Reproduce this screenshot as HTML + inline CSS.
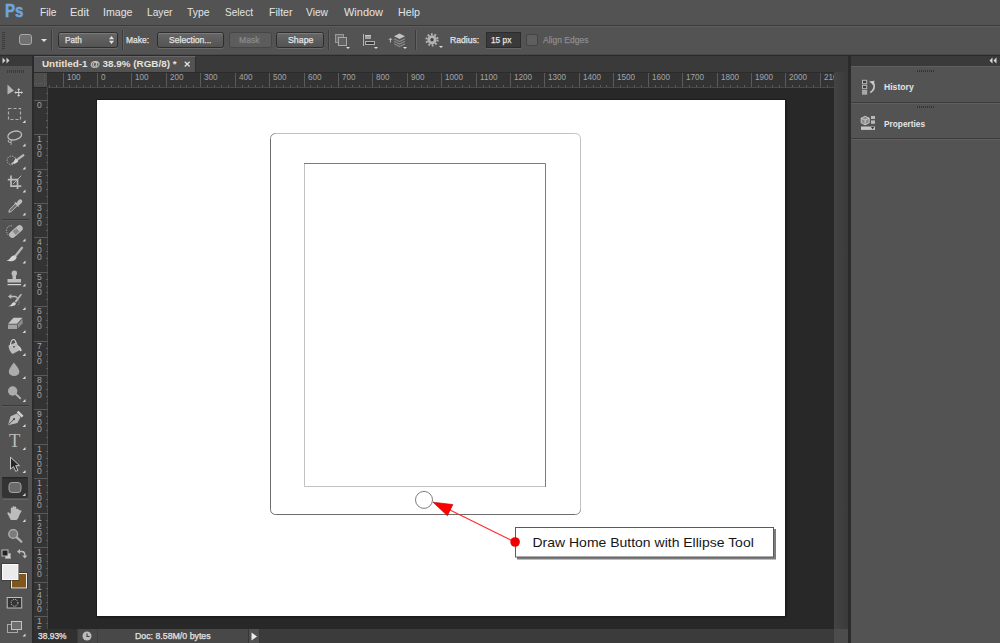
<!DOCTYPE html><html><head><meta charset="utf-8"><title>Photoshop</title><style>
*{margin:0;padding:0;box-sizing:border-box}
html,body{width:1000px;height:643px;overflow:hidden;background:#535353;font-family:"Liberation Sans","DejaVu Sans",sans-serif;}
.a{position:absolute}
.t{position:absolute;white-space:nowrap;color:#e4e4e4;line-height:1}
.btn{position:absolute;top:32px;height:16px;border:1px solid #2e2e2e;border-radius:2.5px;background:linear-gradient(#666,#545454);box-shadow:0 1px 0 rgba(255,255,255,.12), inset 0 1px 0 rgba(255,255,255,.14)}
.sep{position:absolute;top:30px;height:20px;width:2px;border-left:1px solid #3c3c3c;border-right:1px solid #616161}
.rl{position:absolute;font-size:9px;color:#a2a4a8;line-height:9px;white-space:nowrap;transform-origin:0 0;transform:scaleX(.9)}
.vl{position:absolute;font-size:8.6px;color:#a2a4a8;line-height:7.3px;width:6px;text-align:center;word-break:break-all}
.ob{-webkit-text-stroke:0.25px currentColor}
#ps{-webkit-text-stroke:0.5px #6fa5dc}
</style></head><body>
<div class="a" style="left:0;top:0;width:1000px;height:25px;background:#535353"></div>
<div class="a" style="left:0;top:25px;width:1000px;height:1px;background:#3a3a3a"></div>
<div class="a" style="left:0;top:26px;width:1000px;height:1px;background:#5e5e5e"></div>
<div class="t " id="ps" style="left:5px;top:3.19px;font-size:17.5px;line-height:17.5px;height:17.5px;transform-origin:0 0;transform:scaleX(0.8596);font-weight:bold;color:#6fa5dc;">Ps</div>
<div class="t m" style="left:39.5px;top:6.69px;font-size:11px;line-height:11px;height:11px;transform-origin:0 0;transform:scaleX(0.9310);">File</div>
<div class="t m" style="left:70px;top:6.69px;font-size:11px;line-height:11px;height:11px;transform-origin:0 0;transform:scaleX(1.0024);">Edit</div>
<div class="t m" style="left:102.5px;top:6.69px;font-size:11px;line-height:11px;height:11px;transform-origin:0 0;transform:scaleX(0.9650);">Image</div>
<div class="t m" style="left:147px;top:6.69px;font-size:11px;line-height:11px;height:11px;transform-origin:0 0;transform:scaleX(0.9268);">Layer</div>
<div class="t m" style="left:187px;top:6.69px;font-size:11px;line-height:11px;height:11px;transform-origin:0 0;transform:scaleX(0.9436);">Type</div>
<div class="t m" style="left:225px;top:6.69px;font-size:11px;line-height:11px;height:11px;transform-origin:0 0;transform:scaleX(0.9159);">Select</div>
<div class="t m" style="left:268.5px;top:6.69px;font-size:11px;line-height:11px;height:11px;transform-origin:0 0;transform:scaleX(0.9614);">Filter</div>
<div class="t m" style="left:306px;top:6.69px;font-size:11px;line-height:11px;height:11px;transform-origin:0 0;transform:scaleX(0.9305);">View</div>
<div class="t m" style="left:344px;top:6.69px;font-size:11px;line-height:11px;height:11px;transform-origin:0 0;transform:scaleX(0.9969);">Window</div>
<div class="t m" style="left:398px;top:6.69px;font-size:11px;line-height:11px;height:11px;transform-origin:0 0;transform:scaleX(0.9725);">Help</div>
<div class="a" style="left:0;top:27px;width:1000px;height:27px;background:#535353"></div>
<div class="a" style="left:0;top:54px;width:1000px;height:1px;background:#484848"></div><div class="a" style="left:0;top:55px;width:1000px;height:1px;background:#2b2b2b"></div>
<div class="a" style="left:2px;top:32px;width:3px;height:18px;background:repeating-linear-gradient(#3a3a3a 0 1px,transparent 1px 2px)"></div>
<div class="a" style="left:19px;top:34px;width:13px;height:11px;border:1px solid #a9a9a9;border-radius:3px;background:#707070"></div>
<div class="a" style="left:41px;top:39px;width:0;height:0;border-left:3px solid transparent;border-right:3px solid transparent;border-top:3px solid #e0e0e0"></div>
<div class="sep" style="left:51px"></div>
<div class="btn" style="left:58px;width:60px"></div>
<div class="t ob" style="left:65.4px;top:35.98px;font-size:9px;line-height:9px;height:9px;transform-origin:0 0;transform:scaleX(0.9075);">Path</div>
<svg class="a" style="left:108px;top:35px" width="8" height="11"><path d="M1 4.300L3.500 1L6 4.300Z M1 5.700L3.500 9L6 5.700Z" fill="#e4e4e4"/></svg>
<div class="sep" style="left:122px"></div>
<div class="t ob" style="left:126px;top:35.98px;font-size:9px;line-height:9px;height:9px;transform-origin:0 0;transform:scaleX(0.9385);">Make:</div>
<div class="btn" style="left:157px;width:67px"></div>
<div class="t ob" style="left:168.5px;top:35.98px;font-size:9px;line-height:9px;height:9px;transform-origin:0 0;transform:scaleX(0.9546);">Selection...</div>
<div class="btn" style="left:229px;width:43px;background:#5c5c5c;border-color:#464646;box-shadow:none"></div>
<div class="t ob" style="left:239.4px;top:35.98px;font-size:9px;line-height:9px;height:9px;transform-origin:0 0;transform:scaleX(0.9581);color:#8a8a8a;">Mask</div>
<div class="btn" style="left:276px;width:48px"></div>
<div class="t ob" style="left:287.6px;top:35.98px;font-size:9px;line-height:9px;height:9px;transform-origin:0 0;transform:scaleX(0.9761);">Shape</div>
<div class="sep" style="left:328px"></div>
<svg class="a" style="left:334px;top:33px" width="18" height="17">
<rect x="1.5" y="1.5" width="8" height="8" fill="#6c6c6c" stroke="#999"/>
<rect x="4.5" y="4.5" width="8" height="8" fill="#626262" stroke="#a8a8a8"/>
<path d="M12 14 h4 l-2 2z" fill="#ddd"/></svg>
<svg class="a" style="left:361px;top:33px" width="19" height="17">
<path d="M2.5 1 v12" stroke="#b4b4b4" stroke-width="1"/>
<rect x="4" y="2" width="6" height="4" fill="#a4a4a4"/><rect x="4" y="2" width="6" height="1" fill="#c8c8c8"/>
<rect x="4.5" y="8.5" width="9" height="3" fill="#3a3a3a" stroke="#b0b0b0"/>
<path d="M13 14 h4 l-2 2z" fill="#ddd"/></svg>
<svg class="a" style="left:388px;top:32px" width="20" height="18">
<path d="M2.5 6.5 v4 M0.8 8 l1.7 -1.8 l1.7 1.8" stroke="#bbb" fill="none"/>
<path d="M11.5 1.5 l5.5 2.800 l-5.5 2.800 l-5.5 -2.800z" fill="#c4c4c4"/>
<path d="M6 6.800 l5.5 2.800 l5.5 -2.800 M6 9.300 l5.5 2.800 l5.5 -2.800 M6 11.800 l5.5 2.800 l5.5 -2.800" stroke="#8a8a8a" fill="none" stroke-width="1.2"/>
<path d="M15 15 h4 l-2 2z" fill="#ddd"/></svg>
<div class="sep" style="left:415px"></div>
<svg class="a" style="left:424px;top:33px" width="20" height="17">
<g transform="translate(8,6.8)"><circle r="4.6" fill="#b4b4b4"/><circle r="5.6" fill="none" stroke="#b4b4b4" stroke-width="2" stroke-dasharray="1.76 1.76"/><circle r="1.7" fill="#404040"/></g>
<path d="M15 13 h4 l-2 2z" fill="#ddd"/></svg>
<div class="t ob" style="left:449.5px;top:35.98px;font-size:9px;line-height:9px;height:9px;transform-origin:0 0;transform:scaleX(0.9569);">Radius:</div>
<div class="a" style="left:486px;top:32px;width:35px;height:16px;background:#3a3a3a;border:1px solid #2c2c2c;box-shadow:0 1px 0 rgba(255,255,255,.1)"></div>
<div class="t ob" style="left:490.7px;top:35.98px;font-size:9px;line-height:9px;height:9px;transform-origin:0 0;transform:scaleX(0.9221);">15 px</div>
<div class="a" style="left:526px;top:34px;width:12px;height:12px;background:#5e5e5e;border:1px solid #444;border-radius:2px"></div>
<div class="t ob" style="left:542.5px;top:35.98px;font-size:9px;line-height:9px;height:9px;transform-origin:0 0;transform:scaleX(0.9473);color:#8c8c8c;">Align Edges</div>
<div class="a" style="left:0;top:56px;width:32px;height:10px;background:#3a3a3a"></div>
<div class="a" style="left:0;top:66px;width:32px;height:577px;background:#535353"></div>
<div class="a" style="left:32px;top:56px;width:2px;height:587px;background:#2b2b2b"></div>
<svg class="a" style="left:0;top:56px" width="32" height="587" viewBox="0 56 32 587"><path d="M2.5 57.5l3 3l-3 3z M6.5 57.5l3 3l-3 3z" fill="#d0d0d0"/><rect x="7" y="70" width="1" height="3" fill="#3a3a3a"/><rect x="9" y="70" width="1" height="3" fill="#3a3a3a"/><rect x="11" y="70" width="1" height="3" fill="#3a3a3a"/><rect x="13" y="70" width="1" height="3" fill="#3a3a3a"/><rect x="15" y="70" width="1" height="3" fill="#3a3a3a"/><rect x="17" y="70" width="1" height="3" fill="#3a3a3a"/><rect x="19" y="70" width="1" height="3" fill="#3a3a3a"/><rect x="21" y="70" width="1" height="3" fill="#3a3a3a"/><rect x="23" y="70" width="1" height="3" fill="#3a3a3a"/><rect x="2" y="219" width="27" height="1" fill="#3a3a3a"/><rect x="2" y="220" width="27" height="1" fill="#5c5c5c"/><rect x="2" y="405" width="27" height="1" fill="#3a3a3a"/><rect x="2" y="406" width="27" height="1" fill="#5c5c5c"/><path d="M7.5 84.5v10l6.4 -3.8z" fill="#b4b4b4"/><path d="M18.700 89.500v6M15.700 92.500h6" stroke="#d4d4d4" stroke-width="1"/><path d="M18.700 88.200l-1.600 1.800h3.200z M18.700 96.800l-1.600 -1.800h3.200z M14.400 92.500l1.800 -1.600v3.200z M23 92.500l-1.800 -1.600v3.200z" fill="#d4d4d4"/><rect x="8.5" y="108.500" width="12" height="11" fill="none" stroke="#adadad" stroke-width="1.2" stroke-dasharray="3 2"/><path d="M25.5 120v3h-3z" fill="#dcdcdc"/><ellipse cx="14.700" cy="135.500" rx="7" ry="4.300" transform="rotate(-14 14.700 135.500)" fill="none" stroke="#bcbcbc" stroke-width="1.300"/><path d="M9 139.500q-1.500 1.200 -0.300 2.600q1.600 0.900 2.600 -0.400q0.400 -1.400 -1.300 -2.200 M10.800 142q0.800 1.400 0.200 2.800" fill="none" stroke="#bcbcbc" stroke-width="1"/><path d="M25.5 143.5v3h-3z" fill="#dcdcdc"/><circle cx="11.500" cy="160.400" r="4.400" fill="none" stroke="#bcbcbc" stroke-width="1" stroke-dasharray="1.300 1.300"/><path d="M23.300 155.300l-6.400 4.600" stroke="#b6b6b6" stroke-width="2.300" stroke-linecap="round"/><path d="M15.600 158.200l2.800 3q-2.800 3.400 -7.600 2.400q3.400 -1.400 4.800 -5.400z" fill="#d4d4d4"/><path d="M25.5 166.5v3h-3z" fill="#dcdcdc"/><path d="M11 175.500v10.600h10.300 M7.800 179.700h9.700v9.300" fill="none" stroke="#bcbcbc" stroke-width="1.700"/><path d="M21.300 175.700l-8.300 8.300" stroke="#bcbcbc" stroke-width="0.900"/><path d="M25.5 189.5v3h-3z" fill="#dcdcdc"/><path d="M8.800 212.200l0.800 -2.600l6.600 -6.600l1.800 1.800l-6.600 6.600z" fill="#6c6c6c" stroke="#bcbcbc" stroke-width="1"/><path d="M14.800 202.600l3.800 3.800 M16.400 204.200l2.600 -3.400q1.300 -1.300 2.300 -0.400q0.900 1 -0.400 2.300l-3.300 2.700z" fill="#bcbcbc" stroke="#bcbcbc" stroke-width="1.400" stroke-linejoin="round"/><path d="M25.5 212.5v3h-3z" fill="#dcdcdc"/><g transform="rotate(-42 16 231.500)"><rect x="8" y="228.300" width="16" height="6.400" rx="3.200" fill="#bcbcbc"/><rect x="13.500" y="229.300" width="5" height="4.400" fill="#8a8a8a"/></g><path d="M10.500 236.500q-5 -2.500 -3.600 -8q1.600 -3.600 5.600 -2.400" fill="none" stroke="#bcbcbc" stroke-width="1" stroke-dasharray="1.200 1.200"/><path d="M25.5 238.5v3h-3z" fill="#dcdcdc"/><path d="M22 247.800l-6.600 8.200" stroke="#b6b6b6" stroke-width="2.300" stroke-linecap="round"/><path d="M14.600 255.200l2.200 2q-1.200 3.400 -5 4q-3 0.300 -5.200 -0.700q3 -0.700 3.800 -2.700q1.200 -2.600 4.200 -2.600z" fill="#d4d4d4"/><path d="M25.5 260.5v3h-3z" fill="#dcdcdc"/><path d="M12 271.500q2.400 -1.800 4.800 0q0.900 2.200 -0.800 4.300v3.200h5v3.500h-13.500v-3.500h5v-3.200q-1.700 -2.100 -0.500 -4.300z" fill="#bcbcbc"/><rect x="7.500" y="284" width="13.500" height="1.200" fill="#d4d4d4"/><path d="M25.5 283.5v3h-3z" fill="#dcdcdc"/><path d="M22 294.500l-1.200 -0.800l-6.300 7.800l1.600 1.300z" fill="#bcbcbc"/><path d="M14.200 302l1.900 1.700q-1.600 3 -8 2.600q3.200 -1 3.700 -2.500q0.900 -1.700 2.400 -1.800z" fill="#d4d4d4"/><path d="M10.500 296.500h4.500q1.800 0.200 2 1.600" fill="none" stroke="#bcbcbc" stroke-width="1.500"/><path d="M8 296.500l3.300 -2.600v5.200z" fill="#bcbcbc"/><path d="M18.500 300.500q1.600 2.500 -0.500 5" fill="none" stroke="#9a9a9a" stroke-dasharray="1 1"/><path d="M25.5 307v3h-3z" fill="#dcdcdc"/><path d="M13.500 317.800h9l-5.500 6h-9z" fill="#c6c6c6"/><path d="M8 324.600h9v4.400h-9z" fill="#a2a2a2"/><path d="M17.800 324.200l4.800 -5.400v4.400l-4.800 5.400z" fill="#8c8c8c"/><path d="M25.5 330v3h-3z" fill="#dcdcdc"/><path d="M8.500 345.500l8 -3.200l3.600 7.600l-7.600 4q-3.600 -2.800 -4 -8.400z" fill="#bcbcbc"/><path d="M10.500 345.500q0.200 -5.400 2.800 -6q2.400 0 2.800 4.200" fill="none" stroke="#d4d4d4" stroke-width="1.200"/><path d="M17.500 345.200q3.800 1.600 4.200 5.400q-1 1.400 -2 -0.200q-0.400 -2.800 -2.600 -4.200z" fill="#d4d4d4"/><rect x="13" y="346" width="2" height="1.500" fill="#666"/><path d="M25.5 353v3h-3z" fill="#dcdcdc"/><path d="M13.800 362.500q5.600 6.400 5.600 9.200a5.300 4.300 0 0 1 -10.600 0q0 -2.800 5 -9.200z" fill="#acacac"/><path d="M25.5 376v3h-3z" fill="#dcdcdc"/><circle cx="12.700" cy="391" r="4.700" fill="#acacac"/><path d="M15.800 394l5 4.800" stroke="#b4b4b4" stroke-width="1.800"/><path d="M25.5 399v3h-3z" fill="#dcdcdc"/><path d="M8 425.200l2.600 -9l6.400 -2.800l3.600 3.600l-3.200 6z" fill="#bcbcbc"/><path d="M8.600 424.600l5 -5" stroke="#4a4a4a" stroke-width="1"/><circle cx="14" cy="419.200" r="1.100" fill="#4a4a4a"/><path d="M17.600 411.600l5 5" stroke="#d4d4d4" stroke-width="2.400"/><path d="M25.5 424v3h-3z" fill="#dcdcdc"/><text x="14.650" y="447" text-anchor="middle" font-family="Liberation Serif, serif" font-size="18.500" fill="#bcbcbc">T</text><path d="M25.5 447v3h-3z" fill="#dcdcdc"/><path d="M10.500 457.200v12l3 -2.600l2.200 4.800l2.200 -1l-2.200 -4.700h3.800z" fill="#262626" stroke="#c8c8c8" stroke-width="1" stroke-linejoin="round"/><path d="M25.5 470v3h-3z" fill="#dcdcdc"/><rect x="2" y="477" width="26" height="21" rx="2" fill="#343434"/><rect x="2" y="477" width="26" height="1.500" rx="1" fill="#262626"/><rect x="3" y="499" width="25" height="1" fill="#666"/><rect x="9" y="482.500" width="12" height="10" rx="3" fill="#6a6a6a" stroke="#a2a2a2" stroke-width="1"/><path d="M25.5 493v3h-3z" fill="#dcdcdc"/><path d="M10.800 513.500v-5.500q0.900 -1.200 1.800 0v3.800v-5.200q0.900 -1.200 1.800 0v5v-4.600q0.900 -1.200 1.800 0v5v-3q0.900 -1.200 1.800 0l2 1.500q1.300 -0.600 1.600 0.600l-2.400 4.400q-0.600 3.200 -2.600 4.500h-5.800q-1.400 -2.800 -3.600 -7q1 -1.700 2.600 0.300z" fill="#bcbcbc"/><path d="M25.5 519v3h-3z" fill="#dcdcdc"/><circle cx="13.200" cy="534" r="4.400" fill="#7c7c7c" stroke="#b0b0b0" stroke-width="1.400"/><path d="M16.800 537.400l4.600 4.300" stroke="#b4b4b4" stroke-width="2.200" stroke-linecap="round"/><rect x="5.500" y="553.500" width="5" height="5" fill="#cfcfcf" stroke="#9a9a9a"/><rect x="2" y="550" width="6" height="6" fill="#222" stroke="#bdbdbd"/><path d="M19.500 551.500h2.500q2.800 0.200 2.800 3v1.600" fill="none" stroke="#bcbcbc" stroke-width="1.300"/><path d="M17 551.500l3 -2.400v4.800z M24.800 558.600l-2.500 -3h5z" fill="#bcbcbc"/><rect x="10.500" y="572.500" width="17" height="16.500" fill="#222"/><rect x="11.500" y="573.500" width="15" height="14.500" fill="#80561b" stroke="#ededed"/><rect x="1.500" y="563.500" width="17.500" height="17" fill="#2a2a2a"/><rect x="2.500" y="564.500" width="15.500" height="15" fill="#ebebeb" stroke="#fbfbfb"/><rect x="7.200" y="597.500" width="14.500" height="10.500" fill="#343434" stroke="#bdbdbd"/><circle cx="14.500" cy="602.800" r="3.400" fill="none" stroke="#d8d8d8" stroke-width="1" stroke-dasharray="1 1"/><rect x="7.500" y="624.500" width="10" height="8" fill="none" stroke="#a8a8a8"/><rect x="11.500" y="621.500" width="10" height="8" fill="#6c6c6c" stroke="#c2c2c2"/><path d="M25.5 633.5v3h-3z" fill="#dcdcdc"/></svg>
<div class="a" style="left:34px;top:56px;width:814px;height:17px;background:#3a3a3a"></div>
<div class="a" style="left:34px;top:56px;width:162px;height:16px;background:#535353;border-right:1px solid #2e2e2e;border-top:1px solid #666"></div>
<div class="a" style="left:34px;top:72px;width:800px;height:1px;background:#2c2c2c"></div>
<div class="t " id="tab" style="left:42.4px;top:60.38px;font-size:9px;line-height:9px;height:9px;transform-origin:0 0;transform:scaleX(1.0954);font-weight:bold;color:#e6e2dc;">Untitled-1 @ 38.9% (RGB/8) *</div>
<svg class="a" style="left:184px;top:61px" width="7" height="7"><path d="M0.800 0.800l4.800 4.800M5.600 0.800l-4.800 4.800" stroke="#dcdcdc" stroke-width="1.4"/></svg>
<div class="a" style="left:34px;top:73px;width:800px;height:556px;background:#282828"></div>
<svg class="a" style="left:47px;top:73px" width="787" height="15"><rect x="0" y="0" width="787" height="14" fill="#333333"/><rect x="0" y="14" width="787" height="1" fill="#4a4a4a"/><path d="M2.5 12V14" stroke="#5c5c5c"/><path d="M9.5 12V14" stroke="#5c5c5c"/><path d="M16.5 0V14" stroke="#5a5a5a"/><path d="M22.5 12V14" stroke="#5c5c5c"/><path d="M29.5 12V14" stroke="#5c5c5c"/><path d="M36.5 12V14" stroke="#5c5c5c"/><path d="M43.5 12V14" stroke="#5c5c5c"/><path d="M50.5 0V14" stroke="#5a5a5a"/><path d="M57.5 12V14" stroke="#5c5c5c"/><path d="M64.5 12V14" stroke="#5c5c5c"/><path d="M71.5 12V14" stroke="#5c5c5c"/><path d="M78.5 12V14" stroke="#5c5c5c"/><path d="M84.5 0V14" stroke="#5a5a5a"/><path d="M91.5 12V14" stroke="#5c5c5c"/><path d="M98.5 12V14" stroke="#5c5c5c"/><path d="M105.5 12V14" stroke="#5c5c5c"/><path d="M112.5 12V14" stroke="#5c5c5c"/><path d="M119.5 0V14" stroke="#5a5a5a"/><path d="M126.5 12V14" stroke="#5c5c5c"/><path d="M133.5 12V14" stroke="#5c5c5c"/><path d="M139.5 12V14" stroke="#5c5c5c"/><path d="M146.5 12V14" stroke="#5c5c5c"/><path d="M153.5 0V14" stroke="#5a5a5a"/><path d="M160.5 12V14" stroke="#5c5c5c"/><path d="M167.5 12V14" stroke="#5c5c5c"/><path d="M174.5 12V14" stroke="#5c5c5c"/><path d="M181.5 12V14" stroke="#5c5c5c"/><path d="M188.5 0V14" stroke="#5a5a5a"/><path d="M195.5 12V14" stroke="#5c5c5c"/><path d="M201.5 12V14" stroke="#5c5c5c"/><path d="M208.5 12V14" stroke="#5c5c5c"/><path d="M215.5 12V14" stroke="#5c5c5c"/><path d="M222.5 0V14" stroke="#5a5a5a"/><path d="M229.5 12V14" stroke="#5c5c5c"/><path d="M236.5 12V14" stroke="#5c5c5c"/><path d="M243.5 12V14" stroke="#5c5c5c"/><path d="M250.5 12V14" stroke="#5c5c5c"/><path d="M257.5 0V14" stroke="#5a5a5a"/><path d="M263.5 12V14" stroke="#5c5c5c"/><path d="M270.5 12V14" stroke="#5c5c5c"/><path d="M277.5 12V14" stroke="#5c5c5c"/><path d="M284.5 12V14" stroke="#5c5c5c"/><path d="M291.5 0V14" stroke="#5a5a5a"/><path d="M298.5 12V14" stroke="#5c5c5c"/><path d="M305.5 12V14" stroke="#5c5c5c"/><path d="M312.5 12V14" stroke="#5c5c5c"/><path d="M318.5 12V14" stroke="#5c5c5c"/><path d="M325.5 0V14" stroke="#5a5a5a"/><path d="M332.5 12V14" stroke="#5c5c5c"/><path d="M339.5 12V14" stroke="#5c5c5c"/><path d="M346.5 12V14" stroke="#5c5c5c"/><path d="M353.5 12V14" stroke="#5c5c5c"/><path d="M360.5 0V14" stroke="#5a5a5a"/><path d="M367.5 12V14" stroke="#5c5c5c"/><path d="M374.5 12V14" stroke="#5c5c5c"/><path d="M380.5 12V14" stroke="#5c5c5c"/><path d="M387.5 12V14" stroke="#5c5c5c"/><path d="M394.5 0V14" stroke="#5a5a5a"/><path d="M401.5 12V14" stroke="#5c5c5c"/><path d="M408.5 12V14" stroke="#5c5c5c"/><path d="M415.5 12V14" stroke="#5c5c5c"/><path d="M422.5 12V14" stroke="#5c5c5c"/><path d="M429.5 0V14" stroke="#5a5a5a"/><path d="M436.5 12V14" stroke="#5c5c5c"/><path d="M442.5 12V14" stroke="#5c5c5c"/><path d="M449.5 12V14" stroke="#5c5c5c"/><path d="M456.5 12V14" stroke="#5c5c5c"/><path d="M463.5 0V14" stroke="#5a5a5a"/><path d="M470.5 12V14" stroke="#5c5c5c"/><path d="M477.5 12V14" stroke="#5c5c5c"/><path d="M484.5 12V14" stroke="#5c5c5c"/><path d="M491.5 12V14" stroke="#5c5c5c"/><path d="M497.5 0V14" stroke="#5a5a5a"/><path d="M504.5 12V14" stroke="#5c5c5c"/><path d="M511.5 12V14" stroke="#5c5c5c"/><path d="M518.5 12V14" stroke="#5c5c5c"/><path d="M525.5 12V14" stroke="#5c5c5c"/><path d="M532.5 0V14" stroke="#5a5a5a"/><path d="M539.5 12V14" stroke="#5c5c5c"/><path d="M546.5 12V14" stroke="#5c5c5c"/><path d="M553.5 12V14" stroke="#5c5c5c"/><path d="M559.5 12V14" stroke="#5c5c5c"/><path d="M566.5 0V14" stroke="#5a5a5a"/><path d="M573.5 12V14" stroke="#5c5c5c"/><path d="M580.5 12V14" stroke="#5c5c5c"/><path d="M587.5 12V14" stroke="#5c5c5c"/><path d="M594.5 12V14" stroke="#5c5c5c"/><path d="M601.5 0V14" stroke="#5a5a5a"/><path d="M608.5 12V14" stroke="#5c5c5c"/><path d="M614.5 12V14" stroke="#5c5c5c"/><path d="M621.5 12V14" stroke="#5c5c5c"/><path d="M628.5 12V14" stroke="#5c5c5c"/><path d="M635.5 0V14" stroke="#5a5a5a"/><path d="M642.5 12V14" stroke="#5c5c5c"/><path d="M649.5 12V14" stroke="#5c5c5c"/><path d="M656.5 12V14" stroke="#5c5c5c"/><path d="M663.5 12V14" stroke="#5c5c5c"/><path d="M670.5 0V14" stroke="#5a5a5a"/><path d="M676.5 12V14" stroke="#5c5c5c"/><path d="M683.5 12V14" stroke="#5c5c5c"/><path d="M690.5 12V14" stroke="#5c5c5c"/><path d="M697.5 12V14" stroke="#5c5c5c"/><path d="M704.5 0V14" stroke="#5a5a5a"/><path d="M711.5 12V14" stroke="#5c5c5c"/><path d="M718.5 12V14" stroke="#5c5c5c"/><path d="M725.5 12V14" stroke="#5c5c5c"/><path d="M732.5 12V14" stroke="#5c5c5c"/><path d="M738.5 0V14" stroke="#5a5a5a"/><path d="M745.5 12V14" stroke="#5c5c5c"/><path d="M752.5 12V14" stroke="#5c5c5c"/><path d="M759.5 12V14" stroke="#5c5c5c"/><path d="M766.5 12V14" stroke="#5c5c5c"/><path d="M773.5 0V14" stroke="#5a5a5a"/><path d="M780.5 12V14" stroke="#5c5c5c"/></svg>
<div class="rl hl" style="left:66.5px;top:73.100px">100</div>
<div class="rl hl" style="left:100.5px;top:73.100px">0</div>
<div class="rl hl" style="left:134.5px;top:73.100px">100</div>
<div class="rl hl" style="left:169.5px;top:73.100px">200</div>
<div class="rl hl" style="left:203.5px;top:73.100px">300</div>
<div class="rl hl" style="left:238.5px;top:73.100px">400</div>
<div class="rl hl" style="left:272.5px;top:73.100px">500</div>
<div class="rl hl" style="left:307.5px;top:73.100px">600</div>
<div class="rl hl" style="left:341.5px;top:73.100px">700</div>
<div class="rl hl" style="left:375.5px;top:73.100px">800</div>
<div class="rl hl" style="left:410.5px;top:73.100px">900</div>
<div class="rl hl" style="left:444.5px;top:73.100px">1000</div>
<div class="rl hl" style="left:479.5px;top:73.100px">1100</div>
<div class="rl hl" style="left:513.5px;top:73.100px">1200</div>
<div class="rl hl" style="left:547.5px;top:73.100px">1300</div>
<div class="rl hl" style="left:582.5px;top:73.100px">1400</div>
<div class="rl hl" style="left:616.5px;top:73.100px">1500</div>
<div class="rl hl" style="left:651.5px;top:73.100px">1600</div>
<div class="rl hl" style="left:685.5px;top:73.100px">1700</div>
<div class="rl hl" style="left:720.5px;top:73.100px">1800</div>
<div class="rl hl" style="left:754.5px;top:73.100px">1900</div>
<div class="rl hl" style="left:788.5px;top:73.100px">2000</div>
<div class="rl hl" style="left:823.5px;top:73.100px">2100</div>
<div class="a" style="left:834px;top:56px;width:14px;height:573px;background:linear-gradient(90deg,#444,#3a3a3a)"></div>
<div class="a" style="left:834px;top:56px;width:14px;height:16px;background:#3a3a3a"></div>
<svg class="a" style="left:34px;top:88px" width="14" height="541"><rect x="0" y="0" width="14" height="541" fill="#333333"/><rect x="13" y="0" width="1" height="541" fill="#4a4a4a"/><path d="M12 5.5H14" stroke="#5c5c5c"/><path d="M0 12.5H14" stroke="#5a5a5a"/><path d="M12 19.5H14" stroke="#5c5c5c"/><path d="M12 25.5H14" stroke="#5c5c5c"/><path d="M12 32.5H14" stroke="#5c5c5c"/><path d="M12 39.5H14" stroke="#5c5c5c"/><path d="M0 46.5H14" stroke="#5a5a5a"/><path d="M12 53.5H14" stroke="#5c5c5c"/><path d="M12 60.5H14" stroke="#5c5c5c"/><path d="M12 67.5H14" stroke="#5c5c5c"/><path d="M12 74.5H14" stroke="#5c5c5c"/><path d="M0 81.5H14" stroke="#5a5a5a"/><path d="M12 87.5H14" stroke="#5c5c5c"/><path d="M12 94.5H14" stroke="#5c5c5c"/><path d="M12 101.5H14" stroke="#5c5c5c"/><path d="M12 108.5H14" stroke="#5c5c5c"/><path d="M0 115.5H14" stroke="#5a5a5a"/><path d="M12 122.5H14" stroke="#5c5c5c"/><path d="M12 129.5H14" stroke="#5c5c5c"/><path d="M12 136.5H14" stroke="#5c5c5c"/><path d="M12 142.5H14" stroke="#5c5c5c"/><path d="M0 149.5H14" stroke="#5a5a5a"/><path d="M12 156.5H14" stroke="#5c5c5c"/><path d="M12 163.5H14" stroke="#5c5c5c"/><path d="M12 170.5H14" stroke="#5c5c5c"/><path d="M12 177.5H14" stroke="#5c5c5c"/><path d="M0 184.5H14" stroke="#5a5a5a"/><path d="M12 191.5H14" stroke="#5c5c5c"/><path d="M12 198.5H14" stroke="#5c5c5c"/><path d="M12 204.5H14" stroke="#5c5c5c"/><path d="M12 211.5H14" stroke="#5c5c5c"/><path d="M0 218.5H14" stroke="#5a5a5a"/><path d="M12 225.5H14" stroke="#5c5c5c"/><path d="M12 232.5H14" stroke="#5c5c5c"/><path d="M12 239.5H14" stroke="#5c5c5c"/><path d="M12 246.5H14" stroke="#5c5c5c"/><path d="M0 253.5H14" stroke="#5a5a5a"/><path d="M12 260.5H14" stroke="#5c5c5c"/><path d="M12 266.5H14" stroke="#5c5c5c"/><path d="M12 273.5H14" stroke="#5c5c5c"/><path d="M12 280.5H14" stroke="#5c5c5c"/><path d="M0 287.5H14" stroke="#5a5a5a"/><path d="M12 294.5H14" stroke="#5c5c5c"/><path d="M12 301.5H14" stroke="#5c5c5c"/><path d="M12 308.5H14" stroke="#5c5c5c"/><path d="M12 315.5H14" stroke="#5c5c5c"/><path d="M0 321.5H14" stroke="#5a5a5a"/><path d="M12 328.5H14" stroke="#5c5c5c"/><path d="M12 335.5H14" stroke="#5c5c5c"/><path d="M12 342.5H14" stroke="#5c5c5c"/><path d="M12 349.5H14" stroke="#5c5c5c"/><path d="M0 356.5H14" stroke="#5a5a5a"/><path d="M12 363.5H14" stroke="#5c5c5c"/><path d="M12 370.5H14" stroke="#5c5c5c"/><path d="M12 377.5H14" stroke="#5c5c5c"/><path d="M12 383.5H14" stroke="#5c5c5c"/><path d="M0 390.5H14" stroke="#5a5a5a"/><path d="M12 397.5H14" stroke="#5c5c5c"/><path d="M12 404.5H14" stroke="#5c5c5c"/><path d="M12 411.5H14" stroke="#5c5c5c"/><path d="M12 418.5H14" stroke="#5c5c5c"/><path d="M0 425.5H14" stroke="#5a5a5a"/><path d="M12 432.5H14" stroke="#5c5c5c"/><path d="M12 439.5H14" stroke="#5c5c5c"/><path d="M12 445.5H14" stroke="#5c5c5c"/><path d="M12 452.5H14" stroke="#5c5c5c"/><path d="M0 459.5H14" stroke="#5a5a5a"/><path d="M12 466.5H14" stroke="#5c5c5c"/><path d="M12 473.5H14" stroke="#5c5c5c"/><path d="M12 480.5H14" stroke="#5c5c5c"/><path d="M12 487.5H14" stroke="#5c5c5c"/><path d="M0 494.5H14" stroke="#5a5a5a"/><path d="M12 500.5H14" stroke="#5c5c5c"/><path d="M12 507.5H14" stroke="#5c5c5c"/><path d="M12 514.5H14" stroke="#5c5c5c"/><path d="M12 521.5H14" stroke="#5c5c5c"/><path d="M0 528.5H14" stroke="#5a5a5a"/><path d="M12 535.5H14" stroke="#5c5c5c"/></svg>
<div class="vl" style="left:36.500px;top:102.4px;max-height:526.6px;overflow:hidden">0</div>
<div class="vl" style="left:36.500px;top:136.4px;max-height:492.6px;overflow:hidden">100</div>
<div class="vl" style="left:36.500px;top:171.4px;max-height:457.6px;overflow:hidden">200</div>
<div class="vl" style="left:36.500px;top:205.4px;max-height:423.6px;overflow:hidden">300</div>
<div class="vl" style="left:36.500px;top:239.4px;max-height:389.6px;overflow:hidden">400</div>
<div class="vl" style="left:36.500px;top:274.4px;max-height:354.6px;overflow:hidden">500</div>
<div class="vl" style="left:36.500px;top:308.4px;max-height:320.6px;overflow:hidden">600</div>
<div class="vl" style="left:36.500px;top:343.4px;max-height:285.6px;overflow:hidden">700</div>
<div class="vl" style="left:36.500px;top:377.4px;max-height:251.60000000000002px;overflow:hidden">800</div>
<div class="vl" style="left:36.500px;top:411.4px;max-height:217.60000000000002px;overflow:hidden">900</div>
<div class="vl" style="left:36.500px;top:446.4px;max-height:182.60000000000002px;overflow:hidden">1000</div>
<div class="vl" style="left:36.500px;top:480.4px;max-height:148.60000000000002px;overflow:hidden">1100</div>
<div class="vl" style="left:36.500px;top:515.4px;max-height:113.60000000000002px;overflow:hidden">1200</div>
<div class="vl" style="left:36.500px;top:549.4px;max-height:79.60000000000002px;overflow:hidden">1300</div>
<div class="vl" style="left:36.500px;top:584.4px;max-height:44.60000000000002px;overflow:hidden">1400</div>
<div class="vl" style="left:36.500px;top:618.4px;max-height:10.600000000000023px;overflow:hidden">1500</div>
<div class="a" style="left:34px;top:73px;width:13px;height:14px;background:#4e4e4e"></div>
<div class="a" style="left:34px;top:83px;width:13px;height:1px;background:repeating-linear-gradient(90deg,#5c5c5c 0 1px,transparent 1px 2px)"></div>
<div class="a" style="left:44px;top:73px;width:1px;height:14px;background:repeating-linear-gradient(#5c5c5c 0 1px,transparent 1px 2px)"></div>
<div class="a" style="left:97px;top:100px;width:688px;height:516px;background:#fff;box-shadow:0 0 0 1px #1c1c1c,1px 1px 2px rgba(0,0,0,.7)"></div>
<svg class="a" style="left:97px;top:100px" width="689" height="517" viewBox="97 100 689 517">
<g fill="none" stroke-width="1">
<path d="M275.5 133.5H575.5a5 5 0 0 1 5 5V509.5" stroke="#c2c2c2"/>
<path d="M270.5 138.5V509.5a5 5 0 0 0 5 5H575.5" stroke="#6c6c6c"/>
<path d="M270.5 138.5a5 5 0 0 1 5 -5M580.5 509.5a5 5 0 0 1 -5 5" stroke="#8c8c8c"/>
<path d="M304.5 163.5V486.5H545.5" stroke="#c2c2c2"/>
<path d="M304 163.5H545.5V487" stroke="#7c7c7c"/>
</g>
<circle cx="424" cy="499.9" r="8.5" fill="#fff" stroke="#7e7e7e" stroke-width="1"/>
<path d="M515 542 L449 509.6" stroke="#ff2a2a" stroke-width="1.1"/>
<path d="M433 502.2 L452.9 504.5 L447.4 515.7Z" fill="#ff0000" stroke="#b00000" stroke-width="0.6"/>
<rect x="517" y="529" width="259" height="30.5" fill="#7d7d7d"/>
<rect x="515.5" y="527.5" width="258" height="29.500" fill="#fff" stroke="#5a5a5a"/>
<circle cx="515.1" cy="542" r="4.8" fill="#f00000"/>
<text x="532.5" y="546.9" font-family="Liberation Sans, sans-serif" font-size="12.8" fill="#161616" textLength="221.3" lengthAdjust="spacingAndGlyphs" id="callout">Draw Home Button with Ellipse Tool</text>
</svg>
<div class="a" style="left:34px;top:629px;width:800px;height:14px;background:#3b3b3b"></div>
<div class="a" style="left:34px;top:629px;width:43px;height:14px;background:#303030"></div>
<div class="a" style="left:77px;top:629px;width:171px;height:14px;background:#484848;border-left:1px solid #3a3a3a"></div>
<div class="a" style="left:97px;top:629px;width:1px;height:14px;background:#3e3e3e"></div>
<div class="a" style="left:248px;top:629px;width:12px;height:14px;background:#505050;border-left:1px solid #363636;border-right:1px solid #363636"></div>
<div class="a" style="left:834px;top:629px;width:14px;height:14px;background:#4c4c4c"></div>
<div class="t ob" id="zoom" style="left:37.8px;top:632.10px;font-size:8.5px;line-height:8.5px;height:8.5px;transform-origin:0 0;transform:scaleX(0.9921);">38.93%</div>
<div class="t ob" id="doc" style="left:135px;top:632.10px;font-size:8.5px;line-height:8.5px;height:8.5px;transform-origin:0 0;transform:scaleX(1.0324);">Doc: 8.58M/0 bytes</div>
<svg class="a" style="left:82px;top:631px" width="10" height="10"><circle cx="5" cy="5" r="4.500" fill="#bcbcbc"/><path d="M5 2.500v3h2.600" fill="none" stroke="#3c3c3c" stroke-width="1.100"/></svg>
<svg class="a" style="left:251px;top:632px" width="7" height="9"><path d="M0.500 0.500v8l5.500 -4z" fill="#ececec"/></svg>
<div class="a" style="left:848px;top:56px;width:3px;height:587px;background:#2b2b2b"></div>
<div class="a" style="left:851px;top:56px;width:149px;height:10px;background:#3a3a3a"></div>
<div class="a" style="left:851px;top:66px;width:149px;height:577px;background:#535353"></div>
<div class="a" style="left:851px;top:102px;width:149px;height:1px;background:#3c3c3c"></div>
<div class="a" style="left:851px;top:138px;width:149px;height:1px;background:#3c3c3c"></div>
<div class="a" style="left:851px;top:66px;width:149px;height:1px;background:#5f5f5f"></div>
<div class="a" style="left:851px;top:103px;width:149px;height:1px;background:#5f5f5f"></div>
<div class="a" style="left:851px;top:139px;width:149px;height:1px;background:#5f5f5f"></div>
<svg class="a" style="left:989px;top:57px" width="9" height="7"><path d="M3.5 0.5l-3 3l3 3z M7.5 0.5l-3 3l3 3z" fill="#d8d8d8"/></svg>
<div class="a" style="left:917px;top:70px;width:17px;height:2px;background:repeating-linear-gradient(90deg,#333 0 1px,transparent 1px 2px)"></div>
<div class="a" style="left:917px;top:106px;width:17px;height:2px;background:repeating-linear-gradient(90deg,#333 0 1px,transparent 1px 2px)"></div>
<div class="t " id="hist" style="left:883.8px;top:82.88px;font-size:9px;line-height:9px;height:9px;transform-origin:0 0;transform:scaleX(0.9579);font-weight:bold;">History</div>
<div class="t " id="prop" style="left:884px;top:119.58px;font-size:9px;line-height:9px;height:9px;transform-origin:0 0;transform:scaleX(0.9210);font-weight:bold;">Properties</div>
<svg class="a" style="left:856px;top:74px" width="28" height="24" viewBox="856 74 28 24">
<rect x="862.5" y="80.300" width="4.200" height="3.400" fill="#3e3e3e" stroke="#b8b8b8"/>
<rect x="862.5" y="85.300" width="4.200" height="3.400" fill="#3e3e3e" stroke="#b8b8b8"/>
<rect x="862" y="90" width="5.200" height="4.700" fill="#a8a8a8"/>
<path d="M870.300 92.600q5.400 -3.600 3.400 -9.400" fill="none" stroke="#c4c4c4" stroke-width="1.700"/>
<path d="M869 81.400l5.600 -0.600l-1.400 4.800q-1.400 -2.600 -4.200 -4.200z" fill="#cdcdcd"/>
</svg>
<svg class="a" style="left:856px;top:110px" width="28" height="24" viewBox="856 110 28 24">
<path d="M865.200 116.300l4 1.900v4.600l-4 2l-4 -2v-4.600z" fill="#8c8c8c" stroke="#cfcfcf" stroke-width="0.900"/>
<path d="M861.200 118.200l4 1.900l4 -1.900M865.200 120.100v4.700" stroke="#cfcfcf" stroke-width="0.900" fill="none"/>
<rect x="871" y="116" width="4" height="3" fill="#b8b8b8"/><rect x="871" y="120.400" width="4" height="3.400" fill="#b8b8b8"/>
<rect x="861" y="126.500" width="14" height="3.400" fill="#c6c6c6"/><path d="M871 127h3.200l-1.600 2.200z" fill="#2c2c2c"/>
</svg>
</body></html>
